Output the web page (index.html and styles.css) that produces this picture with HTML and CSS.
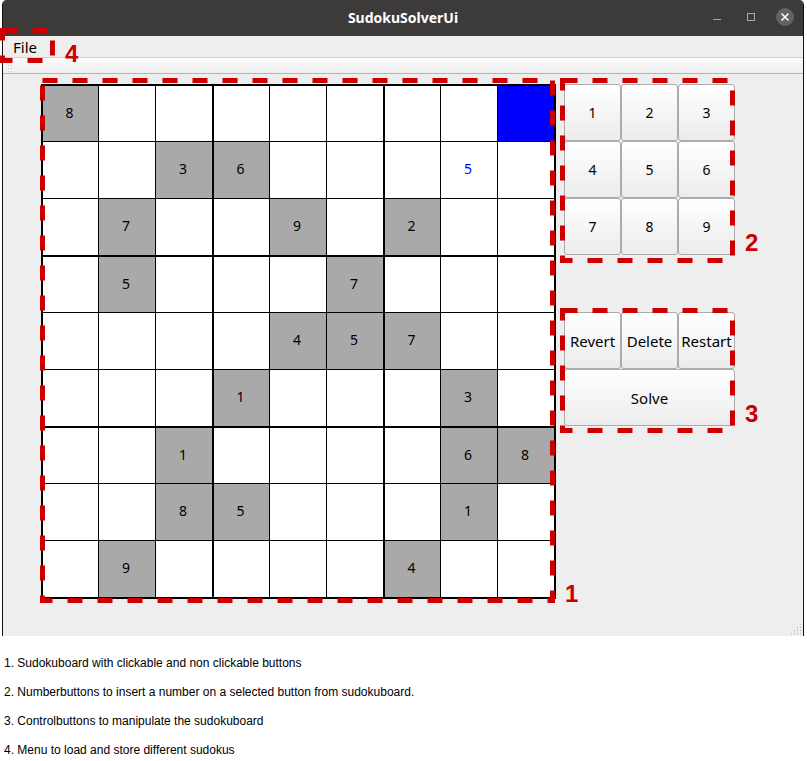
FILE: index.html
```html
<!DOCTYPE html>
<html lang="en">
<head>
<meta charset="utf-8">
<title>SudokuSolverUi</title>
<link rel="stylesheet" href="styles.css">
</head>
<body>
<div class="window">
  <header class="titlebar">
    <h1 class="title">SudokuSolverUi</h1>
    <div class="window-controls">
      <button class="window-button" type="button" aria-label="Minimize">
        <svg width="18" height="18" viewBox="0 0 18 18"><path d="M5 11.5h8" stroke="#a9a8a6" fill="none"/></svg>
      </button>
      <button class="window-button" type="button" aria-label="Maximize">
        <svg width="18" height="18" viewBox="0 0 18 18"><rect x="5.5" y="5.5" width="7" height="7" stroke="#a9a8a6" fill="none"/></svg>
      </button>
      <button class="window-button" type="button" aria-label="Close">
        <svg width="18" height="18" viewBox="0 0 18 18"><circle cx="9" cy="9" r="9" fill="#636362"/><path d="M5.5 5.5l7 7M12.5 5.5l-7 7" stroke="#fff" stroke-width="1.5" fill="none"/></svg>
      </button>
    </div>
  </header>
  <nav class="menubar">
    <button class="menu" type="button">File</button>
    <svg class="mark mark-menu" width="55" height="35" aria-hidden="true"><rect class="dash" x="2.5" y="2.5" width="50" height="30"/></svg>
    <span class="mark number number-menu">4</span>
  </nav>
  <div class="toolbar">
    <svg width="5" height="12" viewBox="0 0 5 12" fill="#c4c4c4" aria-hidden="true"><path d="M0 1h1v1H0zM3 1h1v1H3zM0 4h1v1H0zM3 4h1v1H3zM0 7h1v1H0zM3 7h1v1H3zM0 10h1v1H0zM3 10h1v1H3z"/></svg>
  </div>
  <main class="content">
    <section class="panel">
      <div class="board" id="board"></div>
      <svg class="mark mark-board" width="515" height="525" aria-hidden="true"><rect class="dash" x="2.5" y="2.5" width="510" height="520"/></svg>
      <span class="mark number number-board">1</span>
    </section>
    <div class="side">
      <section class="panel keys">
        <button class="key" type="button">1</button>
        <button class="key" type="button">2</button>
        <button class="key" type="button">3</button>
        <button class="key" type="button">4</button>
        <button class="key" type="button">5</button>
        <button class="key" type="button">6</button>
        <button class="key" type="button">7</button>
        <button class="key" type="button">8</button>
        <button class="key" type="button">9</button>
        <svg class="mark mark-keys" width="175" height="185" aria-hidden="true"><rect class="dash" x="2.5" y="2.5" width="170" height="180"/></svg>
        <span class="mark number number-keys">2</span>
      </section>
      <section class="panel keys">
        <button class="key word" type="button">Revert</button>
        <button class="key word" type="button">Delete</button>
        <button class="key word" type="button">Restart</button>
        <button class="key word wide" type="button">Solve</button>
        <svg class="mark mark-controls" width="175" height="125" aria-hidden="true"><rect class="dash" x="2.5" y="2.5" width="170" height="120"/></svg>
        <span class="mark number number-keys">3</span>
      </section>
    </div>
  </main>
  <svg class="grip" width="10" height="10" viewBox="0 0 10 10" fill="#b4b4b4" aria-hidden="true"><path d="M9 0h1v1H9zM6 3h1v1H6zM9 3h1v1H9zM3 6h1v1H3zM6 6h1v1H6zM9 6h1v1H9zM0 9h1v1H0zM3 9h1v1H3zM6 9h1v1H6zM9 9h1v1H9z"/></svg>
</div>
<footer class="notes">
  <p>1. Sudokuboard with clickable and non clickable buttons</p>
  <p>2. Numberbuttons to insert a number on a selected button from sudokuboard.</p>
  <p>3. Controlbuttons to manipulate the sudokuboard</p>
  <p>4. Menu to load and store different sudokus</p>
</footer>
<script src="board.js"></script>
</body>
</html>
```
FILE: styles.css
```css
* { box-sizing: border-box; }

body {
  margin: 0;
  background: #fff;
  color: #000;
  font: 14px/20px "Noto Sans", sans-serif;
}

button {
  margin: 0;
  padding: 0;
  border: 0;
  background: none;
  color: inherit;
  font: inherit;
}

.window {
  position: relative;
  margin: 0 3px 0 2px;
  padding-bottom: 37px;
  background: #eee;
  border: solid #111;
  border-width: 0 1px;
  border-radius: 5px 5px 0 0;
}

.titlebar {
  display: grid;
  grid-template-columns: 1fr auto 1fr;
  align-items: center;
  height: 36px;
  padding-right: 9px;
  padding-left: 9px;
  background: #3d3b39;
  border-radius: 4px 4px 0 0;
}

.title {
  grid-column: 2;
  margin: 0;
  color: #fff;
  font-size: 14px;
  line-height: 20px;
}

.window-controls {
  display: flex;
  justify-content: flex-end;
  gap: 16px;
  padding-bottom: 2px;
}

.window-button,
.window-button svg {
  display: block;
  width: 18px;
  height: 18px;
}

.menubar {
  position: relative;
  display: flex;
  height: 22px;
  padding-left: 10px;
  border-bottom: 1px solid #d2d2d2;
}

.menu,
.word { font-size: 15px; }

.toolbar {
  height: 16px;
  padding: 3px 0 0 5px;
  background: linear-gradient(#fafafa, #eee);
  border-bottom: 1px solid #b4b4b4;
  line-height: 0;
}

.content {
  display: flex;
  align-items: flex-start;
  gap: 8px;
  padding: 10px 38px 0;
}

.panel { position: relative; }

.board {
  display: grid;
  grid-template-columns: repeat(9, 57px);
  grid-auto-rows: 57px;
  border: solid #000;
  border-width: 0 2px 2px 0;
}

.cell {
  padding: 0 2px 2px 0;
  border: solid #000;
  border-width: 1px 0 0 1px;
  background: #fff;
}

.cell:nth-child(3n + 1) { border-left-width: 2px; }
.cell:nth-child(27n + 1),
.cell:nth-child(27n + 2),
.cell:nth-child(27n + 3),
.cell:nth-child(27n + 4),
.cell:nth-child(27n + 5),
.cell:nth-child(27n + 6),
.cell:nth-child(27n + 7),
.cell:nth-child(27n + 8),
.cell:nth-child(27n + 9) { border-top-width: 2px; }

.given { background: #a9a9a9; }
.selected { background: #00f; }
.entered { color: #00f; }

.side {
  display: grid;
  gap: 57px;
}

.keys {
  display: grid;
  grid-template-columns: repeat(3, 57px);
  grid-auto-rows: 57px;
}

.key {
  border: 1px solid #ababab;
  border-radius: 3px;
  background: linear-gradient(#fff, #ececec);
}

.wide { grid-column: span 3; }

.mark {
  position: absolute;
  pointer-events: none;
}

.dash {
  fill: none;
  stroke: #c00;
  stroke-width: 5;
  stroke-dasharray: 15;
}

.mark-menu { top: -8px; left: -3px; }
.mark-board { top: -6px; left: -1px; }
.mark-keys { top: -6px; left: -4px; }
.mark-controls { top: -4px; left: -4px; }

.number {
  color: #c00;
  font: bold 24px/28px "Liberation Sans", sans-serif;
}

.number-menu { top: 4px; left: 62px; }
.number-board { bottom: -9px; left: calc(100% + 9px); }
.number-keys { bottom: -2px; left: calc(100% + 10px); }

.grip {
  position: absolute;
  right: 2px;
  bottom: 2px;
}

.notes {
  padding: 13px 4px 0;
  font: 12px/29px "Liberation Sans", sans-serif;
}

.notes p { margin: 0; }
```
FILE: board.js
```js
// "." is an empty cell, a digit is a given number, "x" the selected cell and "e" the entered five.
const rows = [
  "8.......x",
  "..36...e.",
  ".7..9.2..",
  ".5...7...",
  "....457..",
  "...1...3.",
  "..1....68",
  "..85...1.",
  ".9....4.."
];

const board = document.getElementById("board");

rows.forEach((row, r) => {
  [...row].forEach((value, c) => {
    const cell = document.createElement("button");
    cell.type = "button";
    cell.className = "cell";
    cell.setAttribute("aria-label", `Row ${r + 1}, column ${c + 1}`);
    if (value === "x") {
      cell.classList.add("selected");
    } else if (value === "e") {
      cell.classList.add("entered");
      cell.textContent = "5";
    } else if (value !== ".") {
      cell.classList.add("given");
      cell.textContent = value;
    }
    board.append(cell);
  });
});
```
